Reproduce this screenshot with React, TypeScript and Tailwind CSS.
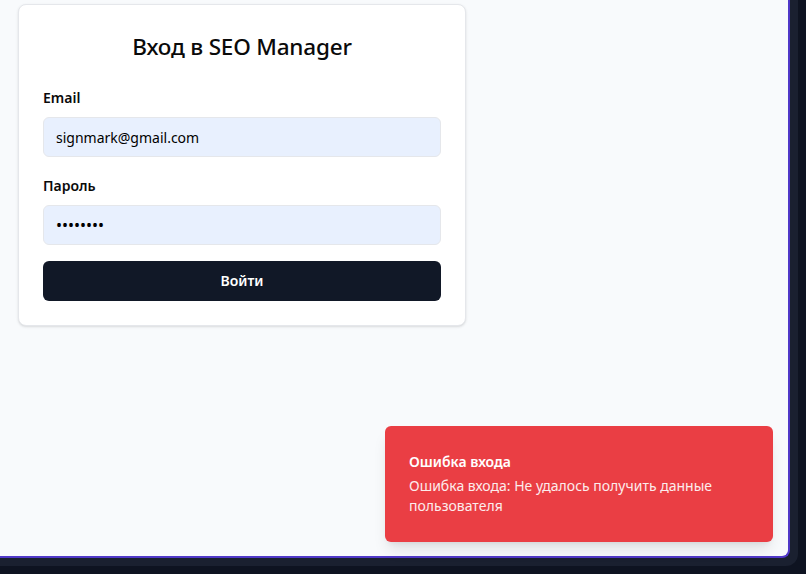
import React, { useState, FormEvent } from "react";

const App: React.FC = () => {
  const [email, setEmail] = useState<string>("signmark@gmail.com");
  const [password, setPassword] = useState<string>("password");

  const handleSubmit = (e: FormEvent) => {
    e.preventDefault();
  };

  return (
    <div
      className="h-screen w-full bg-[#0e1321] pr-2 pb-2"
      style={{ fontFamily: '"Noto Sans", "Open Sans", sans-serif' }}
    >
      <div className="h-full w-full bg-[#1a2030] pr-2 pb-2 rounded-br-xl">
        <div className="relative h-full w-full bg-[#f8fafc] border-r-2 border-b-2 border-[#5038c8] rounded-br-lg pt-[4px] pl-[18px]">
          {/* Login card */}
          <div className="w-[448px] bg-white border border-gray-200 rounded-lg shadow-sm px-6 pt-[26px] pb-6">
            <h1 className="text-center text-[22.5px] leading-8 font-medium text-[#0a0a0a] tracking-[-0.2px]">
              Вход в SEO Manager
            </h1>

            <form onSubmit={handleSubmit} className="mt-[25px]">
              <div>
                <label htmlFor="email" className="block text-sm font-semibold text-[#0a0a0a] leading-5">
                  Email
                </label>
                <input
                  id="email"
                  type="email"
                  value={email}
                  onChange={(e) => setEmail(e.target.value)}
                  className="mt-[9px] w-full h-10 px-3 rounded-md border border-gray-200 bg-[#e8f0fe] text-sm text-black outline-none"
                />
              </div>

              <div className="mt-[19px]">
                <label htmlFor="password" className="block text-sm font-semibold text-[#0a0a0a] leading-5">
                  Пароль
                </label>
                <input
                  id="password"
                  type="password"
                  value={password}
                  onChange={(e) => setPassword(e.target.value)}
                  className="mt-[9px] w-full h-10 px-3 rounded-md border border-gray-200 bg-[#e8f0fe] text-base text-black outline-none"
                />
              </div>

              <button
                type="submit"
                className="mt-4 w-full h-10 rounded-md bg-[#111827] text-white text-sm font-semibold"
              >
                Войти
              </button>
            </form>
          </div>

          {/* Error toast */}
          <div className="absolute right-[15px] bottom-[14px] w-[388px] rounded-md bg-[#ea3e44] shadow-lg px-6 pt-[26px] pb-[26px] text-white">
            <div className="text-sm font-semibold leading-5">Ошибка входа</div>
            <div className="mt-1 text-sm leading-5 opacity-90 pr-6">
              Ошибка входа: Не удалось получить данные пользователя
            </div>
          </div>
        </div>
      </div>
    </div>
  );
};

export default App;
